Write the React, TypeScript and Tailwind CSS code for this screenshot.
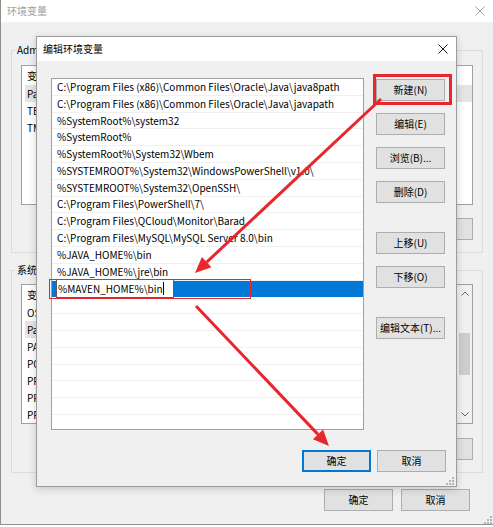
import React from 'react'

const paths = [
  'C:\\Program Files (x86)\\Common Files\\Oracle\\Java\\java8path',
  'C:\\Program Files (x86)\\Common Files\\Oracle\\Java\\javapath',
  '%SystemRoot%\\system32',
  '%SystemRoot%',
  '%SystemRoot%\\System32\\Wbem',
  '%SYSTEMROOT%\\System32\\WindowsPowerShell\\v1.0\\',
  '%SYSTEMROOT%\\System32\\OpenSSH\\',
  'C:\\Program Files\\PowerShell\\7\\',
  'C:\\Program Files\\QCloud\\Monitor\\Barad',
  'C:\\Program Files\\MySQL\\MySQL Server 8.0\\bin',
  '%JAVA_HOME%\\bin',
  '%JAVA_HOME%\\jre\\bin',
]

const userVars = ['Path', 'TEMP', 'TMP']

const sysVars = [
  'OS',
  'Path',
  'PATHEXT',
  'POWERSHELL_DISTRIBUTION_CHANNEL',
  'PROCESSOR_ARCHITECTURE',
  'PROCESSOR_IDENTIFIER',
  'PROCESSOR_LEVEL',
]

function CloseX({ dim }: { dim?: boolean }) {
  return (
    <svg width="10" height="10" viewBox="0 0 10 10" className="block">
      <path d="M0.5 0.5 L9.5 9.5 M9.5 0.5 L0.5 9.5" stroke={dim ? '#a0a0a0' : '#1a1a1a'} strokeWidth="1" fill="none" />
    </svg>
  )
}

function Btn({ children, primary, w = 'w-[69px]' }: { children: React.ReactNode; primary?: boolean; w?: string }) {
  return (
    <div
      className={`${w} h-[22px] shrink-0 flex items-center justify-center whitespace-nowrap bg-[#e1e1e1] ${
        primary ? 'border-2 border-[#0078d7]' : 'border border-[#adadad]'
      }`}
    >
      {children}
    </div>
  )
}

function Chevron({ down }: { down?: boolean }) {
  return (
    <svg width="8" height="5" viewBox="0 0 8 5" className="block">
      <path d={down ? 'M0.5 0.5 L4 4 L7.5 0.5' : 'M0.5 4.5 L4 1 L7.5 4.5'} stroke="#606060" strokeWidth="1" fill="none" />
    </svg>
  )
}

function VarList({ rows, scroll }: { rows: string[]; scroll?: boolean }) {
  return (
    <div className="w-[452px] h-[140px] flex bg-white border border-[#a0a0a0] overflow-hidden">
      <div className="flex-1 flex flex-col">
        <div className="h-[19px] shrink-0 flex items-center pl-[5px]">
          <span className="w-[150px]">变量</span>
          <span>值</span>
        </div>
        {rows.map((k) => (
          <div
            key={k}
            className={`h-[17px] shrink-0 flex items-center ml-[3px] pl-[2px] whitespace-nowrap ${
              k === 'Path' ? 'bg-[#e5e5e5]' : ''
            }`}
          >
            {k}
          </div>
        ))}
      </div>
      {scroll && (
        <div className="w-[15px] shrink-0 flex flex-col bg-[#f0f0f0]">
          <div className="h-[17px] flex items-center justify-center">
            <Chevron />
          </div>
          <div className="flex-1">
            <div className="mt-[31px] mx-[2px] h-[42px] bg-[#cdcdcd]" />
          </div>
          <div className="h-[17px] flex items-center justify-center">
            <Chevron down />
          </div>
        </div>
      )}
    </div>
  )
}

function BackWindow() {
  return (
    <div className="h-[525px] flex flex-col bg-[#f0f0f0] border-l border-b border-[#8f8f8f]">
      {/* title bar */}
      <div className="h-[22px] shrink-0 bg-white flex items-center justify-between pl-[6px] pr-[8px]">
        <span className="text-[#a0a0a0]">环境变量</span>
        <CloseX dim />
      </div>

      <div className="flex flex-col px-[10px]">
        <fieldset className="mt-[20px] border border-[#dcdcdc] px-[9px] pt-[7px] pb-[12px]">
          <legend className="ml-[-6px] px-[2px] leading-[16px]">Administrator 的用户变量(U)</legend>
          <VarList rows={userVars} />
          <div className="flex justify-end gap-[8px] mt-[13px]">
            <Btn w="w-[75px]">新建(N)...</Btn>
            <Btn w="w-[75px]">编辑(E)...</Btn>
            <Btn w="w-[75px]">删除(D)</Btn>
          </div>
        </fieldset>

        <fieldset className="mt-[9px] border border-[#dcdcdc] px-[9px] pt-[6px] pb-[12px]">
          <legend className="ml-[-6px] px-[2px] leading-[16px]">系统变量(S)</legend>
          <VarList rows={sysVars} scroll />
          <div className="flex justify-end gap-[8px] mt-[14px]">
            <Btn w="w-[75px]">新建(W)...</Btn>
            <Btn w="w-[75px]">编辑(I)...</Btn>
            <Btn w="w-[75px]">删除(L)</Btn>
          </div>
        </fieldset>

        <div className="flex justify-end gap-[8px] mt-[16px] pr-[13px]">
          <Btn>确定</Btn>
          <Btn>取消</Btn>
        </div>
      </div>
    </div>
  )
}

function EditDialog() {
  const empty = Array.from({ length: 8 }, (_, i) => i)
  return (
    <div className="absolute left-[36px] top-[36px] w-[421px] h-[451px] flex flex-col bg-[#f0f0f0] border border-[#9c9c9c] shadow-[0_2px_8px_rgba(0,0,0,0.18)]">
      <div className="h-[24px] shrink-0 bg-white flex items-center justify-between pl-[6px] pr-[8px]">
        <span>编辑环境变量</span>
        <CloseX />
      </div>

      <div className="flex pl-[14px] pt-[17px]">
        {/* path list */}
        <div className="w-[313px] h-[352px] flex flex-col bg-white border border-[#a0a0a0] overflow-hidden">
          {paths.map((p) => (
            <div key={p} className="h-[16.8px] shrink-0 flex items-center pl-[5px] border-b border-[#f0f0f0] whitespace-nowrap">
              {p}
            </div>
          ))}
          <div className="h-[16.8px] shrink-0 flex items-center bg-[#0078d7]">
            <div className="ml-[4px] w-[118px] h-[19px] shrink-0 flex items-center pl-[1px] bg-white border border-[#5c5c5c]">
              <span>%MAVEN_HOME%\bin</span>
              <span className="w-px h-[13px] bg-black" />
            </div>
          </div>
          {empty.map((i) => (
            <div key={i} className="h-[16.8px] shrink-0 border-b border-[#f0f0f0]" />
          ))}
        </div>

        {/* button column */}
        <div className="ml-[12px] pt-[1px] flex flex-col">
          <Btn>新建(N)</Btn>
          <div className="mt-[12px]"><Btn>编辑(E)</Btn></div>
          <div className="mt-[12px]"><Btn>浏览(B)...</Btn></div>
          <div className="mt-[12px]"><Btn>删除(D)</Btn></div>
          <div className="mt-[29px]"><Btn>上移(U)</Btn></div>
          <div className="mt-[12px]"><Btn>下移(O)</Btn></div>
          <div className="mt-[29px]"><Btn>编辑文本(T)...</Btn></div>
        </div>
      </div>

      <div className="flex justify-end gap-[6px] pr-[10px] mt-[20px]">
        <Btn primary>确定</Btn>
        <Btn>取消</Btn>
      </div>
    </div>
  )
}

function Grip({ x, y }: { x: number; y: number }) {
  const dots = [
    [2, 0],
    [2, 1],
    [1, 1],
    [2, 2],
    [1, 2],
    [0, 2],
  ]
  return (
    <g fill="#b4b4b4">
      {dots.map(([c, r]) => (
        <rect key={`${c}-${r}`} x={x + c * 3} y={y + r * 3} width="2" height="2" />
      ))}
    </g>
  )
}

// red markup drawn over the screenshot
function Annotations() {
  const red = '#e8262d'
  return (
    <svg className="absolute inset-0 pointer-events-none" width="493" height="527" viewBox="0 0 493 527">
      <Grip x={446} y={477} />
      <Grip x={484} y={516} />
      <rect x="374.5" y="75.5" width="76" height="28" fill="none" stroke={red} strokeWidth="3" />
      <rect x="49.5" y="279.5" width="201" height="19" fill="none" stroke={red} strokeWidth="1" />
      <line x1="381" y1="99" x2="206.7" y2="262.1" stroke={red} strokeWidth="3" />
      <polygon points="195,273 211.5,267.2 201.9,257" fill={red} />
      <line x1="196" y1="306" x2="318" y2="434.4" stroke={red} strokeWidth="3" />
      <polygon points="329,446 312.9,439.2 323.1,429.6" fill={red} />
    </svg>
  )
}

export default function App() {
  return (
    <div className="relative w-[493px] h-[527px] overflow-hidden bg-white text-[10px] leading-[16px] text-black font-['Noto_Sans_CJK_SC','Noto_Sans',sans-serif]">
      <BackWindow />
      <EditDialog />
      <Annotations />
    </div>
  )
}
